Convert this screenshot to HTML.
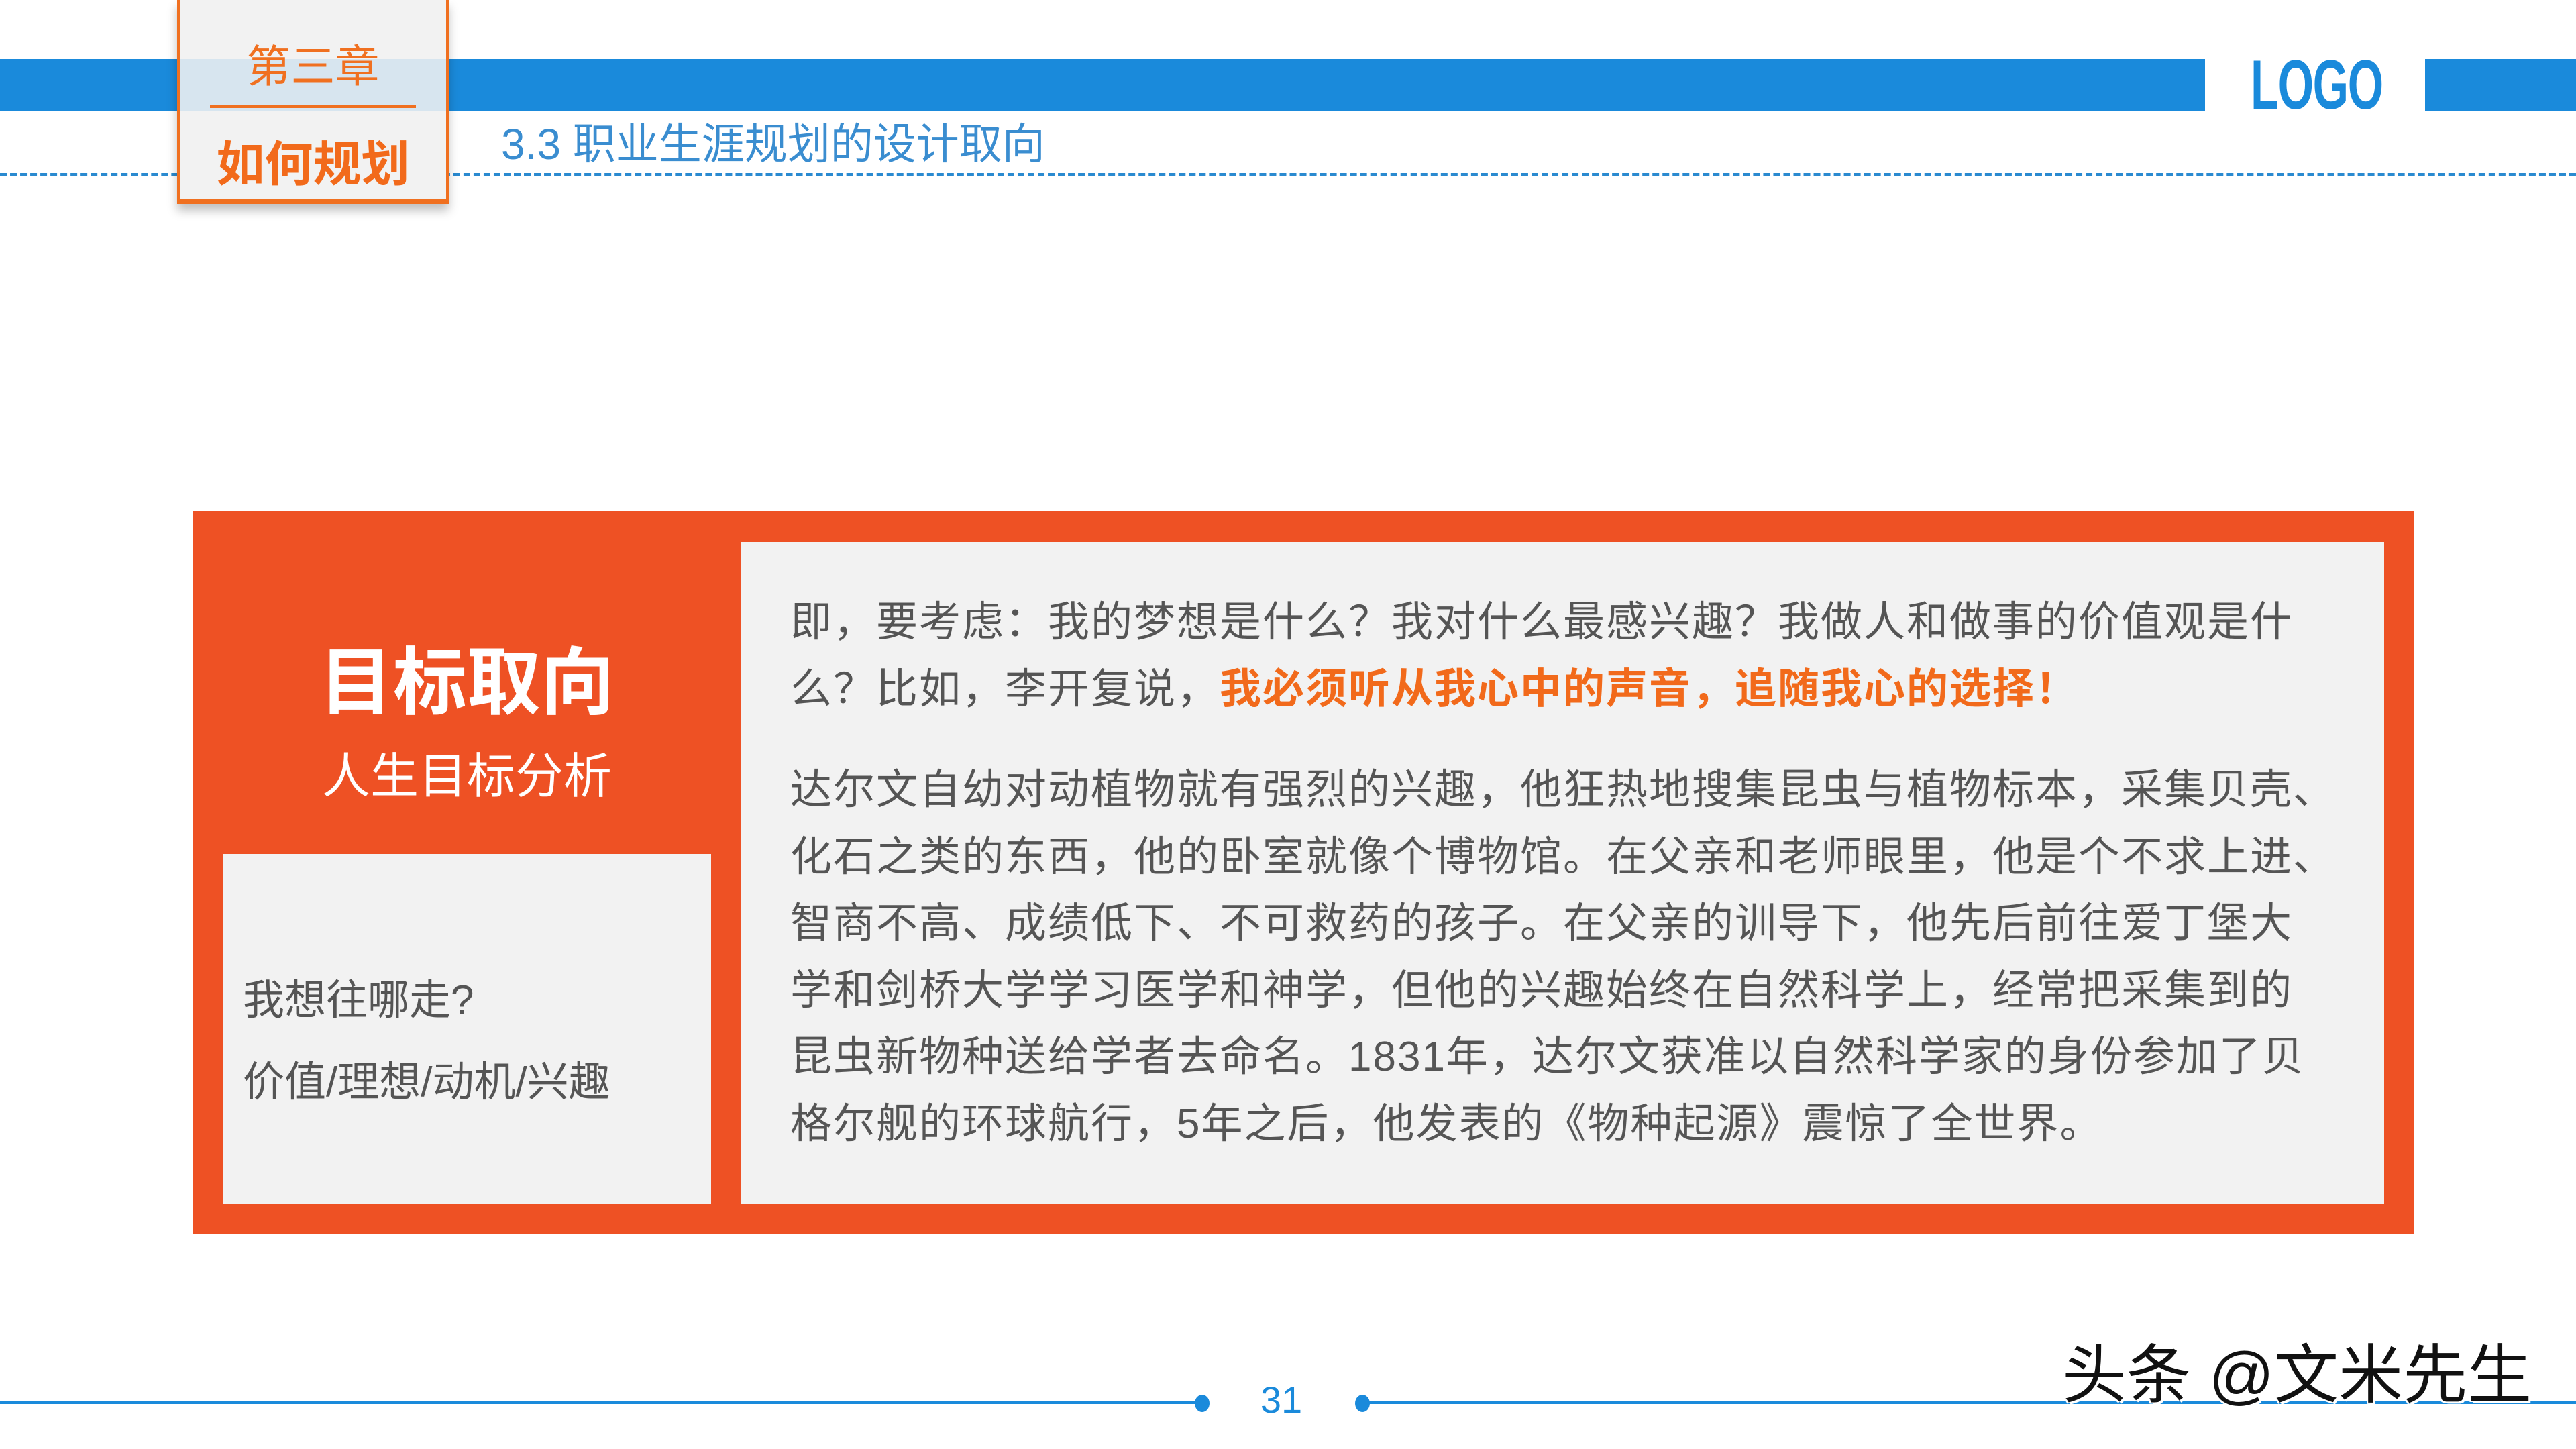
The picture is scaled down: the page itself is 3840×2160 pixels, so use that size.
<!DOCTYPE html>
<html><head><meta charset="utf-8"><style>
*{margin:0;padding:0;box-sizing:border-box}
body{width:3840px;height:2160px;background:#fff;position:relative;overflow:hidden;font-family:"Liberation Sans","Noto Sans CJK SC",sans-serif}
.a{position:absolute;white-space:nowrap}
</style></head><body>
<div class="a" style="left:0;top:88px;width:3287px;height:77px;background:#1a8adb"></div>
<div class="a" style="left:3615px;top:88px;width:225px;height:77px;background:#1a8adb"></div>
<div class="a" style="left:3355px;top:68px;font-size:104px;font-weight:bold;color:#1a8adb;font-family:'Liberation Sans Narrow','Liberation Sans',sans-serif;transform:scaleX(0.66);transform-origin:left;letter-spacing:-2px">LOGO</div>
<div class="a" style="left:0;top:258px;width:3840px;border-top:5px dashed #2a8ad0"></div>
<div class="a" style="left:264px;top:0;width:405px;height:304px;background:#f2f2f2;border:4px solid #f07020;border-top:none;border-bottom-width:8px;box-shadow:0 10px 14px rgba(0,0,0,.25)"></div>
<div class="a" style="left:268px;top:88px;width:397px;height:77px;background:rgba(26,138,219,.12)"></div>
<div class="a" style="left:264px;width:405px;top:46px;text-align:center;font-size:66px;color:#f07020">第三章</div>
<div class="a" style="left:313px;top:157px;width:307px;height:4px;background:#f07020"></div>
<div class="a" style="left:264px;width:405px;top:186px;text-align:center;font-size:72px;font-weight:bold;color:#f26a1b">如何规划</div>
<div class="a" style="left:747px;top:164px;font-size:64px;color:#3a8dd0">3.3 职业生涯规划的设计取向</div>
<div class="a" style="left:287px;top:762px;width:3311px;height:1077px;background:#ee5124"></div>
<div class="a" style="left:1104px;top:808px;width:2450px;height:987px;background:#f2f2f2"></div>
<div class="a" style="left:333px;top:1273px;width:727px;height:522px;background:#f2f2f2"></div>
<div class="a" style="left:287px;width:818px;top:928px;text-align:center;font-size:110px;font-weight:bold;color:#fff">目标取向</div>
<div class="a" style="left:287px;width:818px;top:1098px;text-align:center;font-size:72px;color:#fff">人生目标分析</div>
<div class="a" style="left:362px;top:1440px;font-size:62px;color:#555">我想往哪走?</div>
<div class="a" style="left:362px;top:1562px;font-size:62px;color:#555">价值/理想/动机/兴趣</div>
<div class="a" style="left:1178px;top:878px;font-size:62px;line-height:100px;color:#555;letter-spacing:2px">即，要考虑：我的梦想是什么？我对什么最感兴趣？我做人和做事的价值观是什<br>么？比如，李开复说，<b style="color:#f26a1b">我必须听从我心中的声音，追随我心的选择！</b></div>
<div class="a" style="left:1178px;top:1128px;font-size:62px;line-height:99.5px;color:#555;letter-spacing:2px">达尔文自幼对动植物就有强烈的兴趣，他狂热地搜集昆虫与植物标本，采集贝壳、<br>化石之类的东西，他的卧室就像个博物馆。在父亲和老师眼里，他是个不求上进、<br>智商不高、成绩低下、不可救药的孩子。在父亲的训导下，他先后前往爱丁堡大<br>学和剑桥大学学习医学和神学，但他的兴趣始终在自然科学上，经常把采集到的<br>昆虫新物种送给学者去命名。1831年，达尔文获准以自然科学家的身份参加了贝<br>格尔舰的环球航行，5年之后，他发表的《物种起源》震惊了全世界。</div>
<div class="a" style="left:0;top:2089px;width:1793px;height:4px;background:#1a8adb"></div>
<div class="a" style="left:2030px;top:2089px;width:1810px;height:4px;background:#1a8adb"></div>
<div class="a" style="left:1781px;top:2079px;width:22px;height:26px;border-radius:50%;background:#1a8adb"></div>
<div class="a" style="left:2020px;top:2079px;width:22px;height:26px;border-radius:50%;background:#1a8adb"></div>
<div class="a" style="left:1850px;width:120px;top:2054px;text-align:center;font-size:56px;color:#1a8adb">31</div>
<div class="a" style="left:3074px;top:1972px;font-size:96px;color:#111;text-shadow:3px 3px 0 #fff,-2px -2px 0 #fff,2px -2px 0 #fff,-2px 2px 0 #fff">头条 @文米先生</div>
</body></html>
